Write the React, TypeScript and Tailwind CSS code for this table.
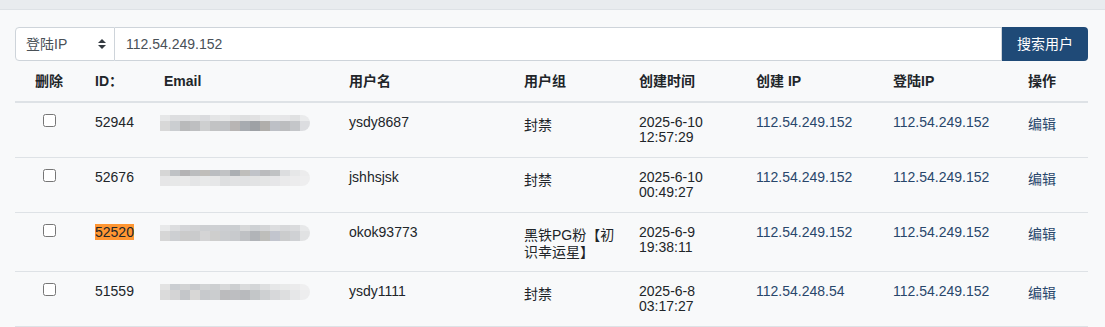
import { useState } from 'react'

interface UserRow {
  id: string
  username: string
  group: string
  date: string
  time: string
  createIp: string
  loginIp: string
  highlight?: boolean
  mosaic: string[][]
}

const font = { fontFamily: '"Liberation Sans", Arial, "Noto Sans CJK SC", sans-serif' }

const rows: UserRow[] = [
  {
    id: '52944',
    username: 'ysdy8687',
    group: '封禁',
    date: '2025-6-10',
    time: '12:57:29',
    createIp: '112.54.249.152',
    loginIp: '112.54.249.152',
    mosaic: [
      ['#e6e7e8', '#dddee0', '#dcdddf', '#dfe0e1', '#dadbde', '#e4e5e6', '#e6e7e8', '#e1e2e3', '#dedfe0', '#e1e1e2', '#e6e7e8', '#e7e8e9', '#e6e6e8', '#e0e1e2', '#eaebec'],
      ['#d8d8d8', '#cbced1', '#b9babb', '#bebfc1', '#cecfd0', '#c2c3c4', '#c0c2c5', '#b8b5b4', '#a7abb0', '#9ea1a5', '#b0aeab', '#bdc0c6', '#bcbdbf', '#c4c6c9', '#dcdde0'],
    ],
  },
  {
    id: '52676',
    username: 'jshhsjsk',
    group: '封禁',
    date: '2025-6-10',
    time: '00:49:27',
    createIp: '112.54.249.152',
    loginIp: '112.54.249.152',
    mosaic: [
      ['#d6d6d6', '#bfc2c5', '#b4b3b4', '#bbbdbf', '#c0beba', '#babdc1', '#c1c2c4', '#abafb3', '#bfbebb', '#c0c3c9', '#babbbd', '#c0c2c4', '#dcdddf', '#e6e7e8', '#ececed'],
      ['#e6e6e7', '#e7e8e8', '#e9e9e9', '#e4e5e6', '#e8e9e9', '#e6e7e8', '#dedfe0', '#e1e2e3', '#e0e1e2', '#e2e3e4', '#e4e5e5', '#e6e6e8', '#eaeaeb', '#ececed', '#eeeeef'],
    ],
  },
  {
    id: '52520',
    username: 'okok93773',
    group: '黑铁PG粉【初识幸运星】',
    date: '2025-6-9',
    time: '19:38:11',
    createIp: '112.54.249.152',
    loginIp: '112.54.249.152',
    highlight: true,
    mosaic: [
      ['#e8e9ea', '#dcdddf', '#d4d5d8', '#d1d2d4', '#cdcfd2', '#ced0d3', '#ccced2', '#cbced1', '#d7d8d9', '#ced1d4', '#d4d5d7', '#dcdddf', '#d7d8da', '#dadbdd', '#e7e8e9'],
      ['#d6d6d6', '#cdcfd2', '#cbcbcb', '#cacbcc', '#d4d4d5', '#cececd', '#cacccf', '#c8cacd', '#bfc1c4', '#b1b4b8', '#bebebb', '#c2c5ce', '#cbcccd', '#cfd1d4', '#e1e2e3'],
    ],
  },
  {
    id: '51559',
    username: 'ysdy1111',
    group: '封禁',
    date: '2025-6-8',
    time: '03:17:27',
    createIp: '112.54.248.54',
    loginIp: '112.54.249.152',
    mosaic: [
      ['#e3e3e3', '#cbced2', '#d2d3d4', '#c9cbce', '#d2d4d5', '#cdcfd1', '#d7d8d9', '#cdcfd1', '#dadbdc', '#d4d6d8', '#dedfe0', '#e6e7e8', '#e9eaea', '#ebebec', '#efeff0'],
      ['#dbdbdb', '#d4d4d5', '#c4c6c9', '#d8d7d6', '#c7c9cc', '#cbcdcf', '#bbbbbd', '#bdbec1', '#b8babd', '#c3c6c8', '#ced0d2', '#d7d8da', '#dddedf', '#e6e7e8', '#ededee'],
    ],
  },
]

function Mosaic({ blocks }: { blocks: string[][] }) {
  return (
    <div className="flex w-[150px] flex-col overflow-hidden rounded-r-lg">
      {blocks.map((line, i) => (
        <div key={i} className={i === 0 ? 'flex h-[6px]' : 'flex h-[10px]'}>
          {line.map((c, j) => (
            <div key={j} className="h-full w-[10px]" style={{ backgroundColor: c }} />
          ))}
        </div>
      ))}
    </div>
  )
}

export default function App() {
  const [field, setField] = useState('login_ip')
  const [keyword, setKeyword] = useState('112.54.249.152')

  return (
    <div className="min-h-screen w-full bg-[#f8f9fa] text-[14px] text-[#212529]" style={font}>
      <div className="h-[10px] w-full border-b border-[#dee2e6] bg-[#e9ecef]" />

      <div className="pl-[15px] pr-[17px] pt-[17px]">
        <div className="flex h-[34px] w-full">
          <div className="relative w-[100px]">
            <select
              value={field}
              onChange={(e) => setField(e.target.value)}
              className="h-full w-full appearance-none rounded-l-[4px] border border-[#ced4da] bg-white pl-[10px] text-[14px] text-[#495057] outline-none"
              style={font}
            >
              <option value="login_ip">登陆IP</option>
              <option value="create_ip">创建 IP</option>
              <option value="email">Email</option>
            </select>
            <svg className="pointer-events-none absolute right-[9px] top-[12px]" width="8" height="10" viewBox="0 0 8 10">
              <path d="M4 0 L8 4 H0 Z" fill="#343a40" />
              <path d="M4 10 L8 6 H0 Z" fill="#343a40" />
            </svg>
          </div>
          <input
            value={keyword}
            onChange={(e) => setKeyword(e.target.value)}
            className="h-full flex-1 border border-l-0 border-[#ced4da] bg-white px-[11px] text-[14px] text-[#495057] outline-none"
            style={font}
          />
          <button
            type="button"
            className="h-full w-[86px] rounded-r-[4px] bg-[#1f4a77] text-[14px] text-white"
          >
            搜索用户
          </button>
        </div>

        <table className="w-full table-fixed border-collapse">
          <colgroup>
            <col className="w-[68px]" />
            <col className="w-[69px]" />
            <col className="w-[185px]" />
            <col className="w-[175px]" />
            <col className="w-[115px]" />
            <col className="w-[117px]" />
            <col className="w-[137px]" />
            <col className="w-[135px]" />
            <col />
          </colgroup>
          <thead>
            <tr className="border-b-2 border-[#dee2e6] text-left font-bold leading-[16px]">
              <th className="p-[12px] text-center">删除</th>
              <th className="p-[12px]">ID：</th>
              <th className="p-[12px]">Email</th>
              <th className="p-[12px]">用户名</th>
              <th className="p-[12px]">用户组</th>
              <th className="p-[12px]">创建时间</th>
              <th className="p-[12px]">创建 IP</th>
              <th className="p-[12px]">登陆IP</th>
              <th className="p-[12px]">操作</th>
            </tr>
          </thead>
          <tbody>
            {rows.map((r) => (
              <tr key={r.id} className="border-b border-[#dee2e6] align-top leading-[15px]">
                <td className="p-[12px] text-center">
                  <input type="checkbox" className="mt-[-1px] h-[13px] w-[13px]" />
                </td>
                <td className="p-[12px]">
                  <span className={r.highlight ? 'bg-[#ff9632]' : ''}>{r.id}</span>
                </td>
                <td className="px-[8px] py-[12px]">
                  <Mosaic blocks={r.mosaic} />
                </td>
                <td className="p-[12px]">{r.username}</td>
                <td className="px-[12px] pb-[10px] pt-[14px] leading-[17px]">{r.group}</td>
                <td className="p-[12px]">
                  {r.date}
                  <br />
                  {r.time}
                </td>
                <td className="p-[12px] text-[#28466b]">{r.createIp}</td>
                <td className="p-[12px] text-[#28466b]">{r.loginIp}</td>
                <td className="p-[12px] pt-[14px]">
                  <a href="#" className="text-[#28466b]">编辑</a>
                </td>
              </tr>
            ))}
          </tbody>
        </table>
      </div>
    </div>
  )
}
